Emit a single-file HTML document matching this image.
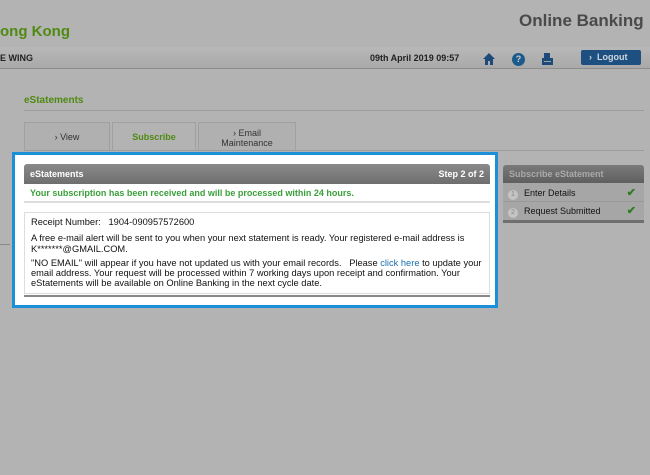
<!DOCTYPE html>
<html><head><meta charset="utf-8"><style>
*{margin:0;padding:0;box-sizing:border-box}
body{width:650px;height:475px;background:#b3b3b3;font-family:"Liberation Sans",Arial,sans-serif;position:relative;overflow:hidden;font-size:9px;color:#111}
.a{position:absolute}
</style></head><body>
<div class="a" style="left:519px;top:11px;font-size:17px;font-weight:bold;color:#4a4a4a">Online Banking</div>
<div class="a" style="left:0;top:23px;font-size:15px;font-weight:bold;color:#4f8a12">ong Kong</div>
<div class="a" style="left:0;top:47px;width:650px;height:22px;background:linear-gradient(#b8b8b8,#a9a9a9);border-bottom:1px solid #8d8d8d"></div>
<div class="a" style="left:0;top:53px;font-weight:bold;font-size:9px;color:#222">E WING</div>
<div class="a" style="left:370px;top:53px;font-weight:bold;font-size:9px;color:#222">09th April 2019 09:57</div>
<svg class="a" style="left:482px;top:52px" width="14" height="14" viewBox="0 0 14 14"><path d="M7 1L1 7h2v6h3V9h2v4h3V7h2z" fill="#1d4a78"/></svg>
<div class="a" style="left:512px;top:53px;width:13px;height:13px;border-radius:50%;background:#1d5a8c;color:#ccc;font-size:9px;font-weight:bold;text-align:center;line-height:13px">?</div>
<svg class="a" style="left:541px;top:52px" width="13" height="14" viewBox="0 0 13 14"><rect x="3" y="1" width="6" height="5" fill="#1d4a78"/><rect x="1" y="6" width="11" height="7" fill="#1d4a78"/><rect x="3" y="9" width="7" height="1" fill="#9aa"/></svg>
<div class="a" style="left:581px;top:50px;width:60px;height:15px;background:#1d4f80;border-radius:2px;color:#cfd6dd;font-weight:bold;font-size:9px;line-height:15px;padding-left:8px">› &nbsp;Logout</div>
<div class="a" style="left:24px;top:95px;font-weight:bold;font-size:10px;color:#4f8a12">eStatements</div>
<div class="a" style="left:24px;top:110px;width:620px;border-top:1px solid #9c9c9c"></div>
<div class="a" style="left:24px;top:122px;width:86px;height:28px;border:1px solid #a0a0a0;border-bottom:none;background:#b0b0b0;text-align:center;line-height:28px;color:#333">› View</div>
<div class="a" style="left:112px;top:122px;width:84px;height:29px;border:1px solid #a0a0a0;border-bottom:none;background:#b3b3b3;text-align:center;line-height:29px;color:#4f8a12;font-weight:bold">Subscribe</div>
<div class="a" style="left:198px;top:122px;width:98px;height:28px;border:1px solid #a0a0a0;border-bottom:none;background:#b0b0b0;text-align:center;padding-top:5px;line-height:10px;color:#333">› Email<br>Maintenance</div>
<div class="a" style="left:24px;top:150px;width:620px;border-top:1px solid #9c9c9c"></div>
<div class="a" style="left:0;top:244px;width:10px;border-top:1px solid #888"></div>

<div class="a" style="left:12px;top:152px;width:486px;height:156px;border:3px solid #1b8fd8;background:#fff"></div>
<div class="a" style="left:24px;top:164px;width:466px;height:20px;background:linear-gradient(#8a8a8a,#6e6e6e);border-radius:3px 3px 0 0;color:#fff;font-weight:bold;font-size:9px;line-height:20px;padding:0 6px">eStatements<span style="float:right">Step 2 of 2</span></div>
<div class="a" style="left:24px;top:184px;width:466px;height:19px;border-bottom:2px solid #ddd;color:#3aa03a;font-weight:bold;font-size:9px;line-height:19px;padding-left:6px">Your subscription has been received and will be processed within 24 hours.</div>
<div class="a" style="left:24px;top:212px;width:466px;height:82px;border:1px solid #ddd;padding:4px 6px;font-size:9.3px;line-height:10.3px">
<div>Receipt Number: &nbsp;&nbsp;1904-090957572600</div>
<div style="margin-top:6px">A free e-mail alert will be sent to you when your next statement is ready. Your registered e-mail address is K*******@GMAIL.COM.</div>
<div style="margin-top:4px">"NO EMAIL" will appear if you have not updated us with your email records. &nbsp;&nbsp;Please <span style="color:#1a6fb0">click here</span> to update your email address. Your request will be processed within 7 working days upon receipt and confirmation. Your eStatements will be available on Online Banking in the next cycle date.</div>
</div>
<div class="a" style="left:24px;top:295px;width:466px;border-top:2px solid #888"></div>

<div class="a" style="left:503px;top:165px;width:141px;height:58px;background:#a6a6a6;border-radius:3px 3px 0 0;border-bottom:3px solid #6f6f6f"></div>
<div class="a" style="left:503px;top:165px;width:141px;height:18px;background:linear-gradient(#7a7a7a,#5f5f5f);border-radius:3px 3px 0 0;color:#aaa;font-weight:bold;font-size:9px;line-height:18px;padding-left:6px">Subscribe eStatement</div>
<div class="a" style="left:503px;top:184px;width:141px;height:18px;border-bottom:1px solid #999;font-size:9px;line-height:18px;color:#111"><span style="display:inline-block;width:10px;height:10px;border-radius:50%;background:#c4c4c4;color:#888;font-size:7px;line-height:10px;text-align:center;margin:0 6px 0 5px">1</span>Enter Details<span style="position:absolute;right:8px;color:#2e7d20;font-weight:bold;font-size:11px">✔</span></div>
<div class="a" style="left:503px;top:202px;width:141px;height:18px;font-size:9px;line-height:18px;color:#111"><span style="display:inline-block;width:10px;height:10px;border-radius:50%;background:#c4c4c4;color:#888;font-size:7px;line-height:10px;text-align:center;margin:0 6px 0 5px">2</span>Request Submitted<span style="position:absolute;right:8px;color:#2e7d20;font-weight:bold;font-size:11px">✔</span></div>
</body></html>
